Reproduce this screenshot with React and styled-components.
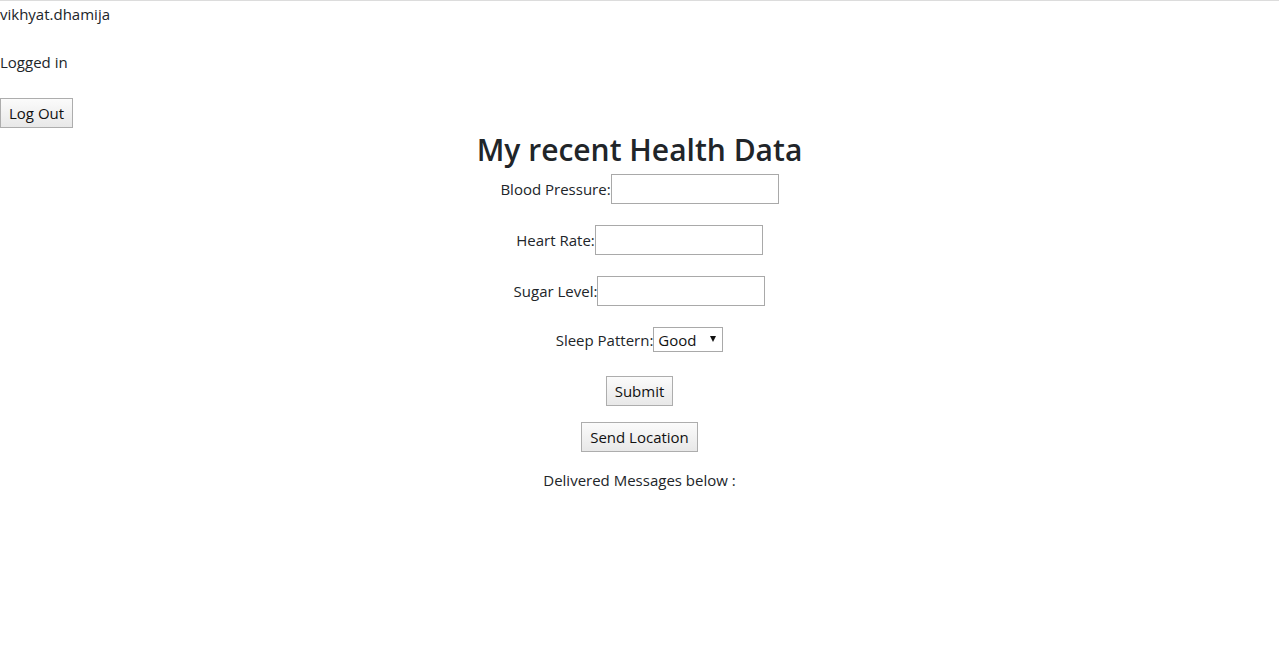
import React, { useState } from 'react';
import styled, { createGlobalStyle } from 'styled-components';

const GlobalStyle = createGlobalStyle`
  html, body {
    margin: 0;
    padding: 0;
    background: #fff;
  }
  body {
    border-top: 1px solid #dcdcdc;
    font-family: "Open Sans", "Noto Sans", sans-serif;
    font-size: 15px;
    line-height: 24px;
    color: #212529;
  }
`;

const Header = styled.div`
  padding-top: 1px;
`;

const Line = styled.div`
  height: 24px;
  margin-bottom: ${(p) => p.gap || 0}px;
`;

const Button = styled.button`
  font-family: "Open Sans", "Noto Sans", sans-serif;
  font-size: 15px;
  color: #111;
  height: 30px;
  padding: 0 8px;
  border: 1px solid #adadad;
  border-radius: 0;
  background: linear-gradient(#fbfbfb, #e8e8e8);
  cursor: pointer;
  margin-bottom: ${(p) => p.gap || 0}px;
`;

const Main = styled.div`
  display: flex;
  flex-direction: column;
  align-items: center;
`;

const Title = styled.h1`
  margin: 0 0 3px;
  font-size: 30px;
  font-weight: 600;
  line-height: 43px;
`;

const Row = styled.div`
  display: flex;
  align-items: center;
  margin-bottom: ${(p) => p.gap || 0}px;
`;

const Input = styled.input`
  width: 168px;
  height: 30px;
  box-sizing: border-box;
  border: 1px solid #a9a9a9;
  padding: 0 4px;
  font-size: 15px;
  outline: none;
`;

const SelectBox = styled.div`
  position: relative;
  width: 70px;
  height: 25px;
  box-sizing: border-box;
  border: 1px solid #a9a9a9;
  display: flex;
  align-items: center;

  select {
    appearance: none;
    border: none;
    background: transparent;
    width: 100%;
    height: 100%;
    padding: 0 0 0 4px;
    font-family: "Open Sans", "Noto Sans", sans-serif;
    font-size: 15px;
    color: #111;
    outline: none;
  }

  &::after {
    content: "";
    position: absolute;
    right: 6px;
    top: 8px;
    border-left: 3.5px solid transparent;
    border-right: 3.5px solid transparent;
    border-top: 6px solid #111;
    pointer-events: none;
  }
`;

const Note = styled.div`
  height: 24px;
`;

export default function App() {
  const [sleep, setSleep] = useState('Good');
  return (
    <>
      <GlobalStyle />
      <Header>
        <Line gap={24}>vikhyat.dhamija</Line>
        <Line gap={24}>Logged in</Line>
        <Button>Log Out</Button>
      </Header>
      <Main>
        <Title>My recent Health Data</Title>
        <Row gap={21}>
          Blood Pressure:<Input type="text" />
        </Row>
        <Row gap={21}>
          Heart Rate:<Input type="text" />
        </Row>
        <Row gap={21}>
          Sugar Level:<Input type="text" />
        </Row>
        <Row gap={24}>
          Sleep Pattern:
          <SelectBox>
            <select value={sleep} onChange={(e) => setSleep(e.target.value)}>
              <option>Good</option>
              <option>Average</option>
              <option>Poor</option>
            </select>
          </SelectBox>
        </Row>
        <Button gap={16}>Submit</Button>
        <Button gap={16}>Send Location</Button>
        <Note>Delivered Messages below :</Note>
      </Main>
    </>
  );
}
